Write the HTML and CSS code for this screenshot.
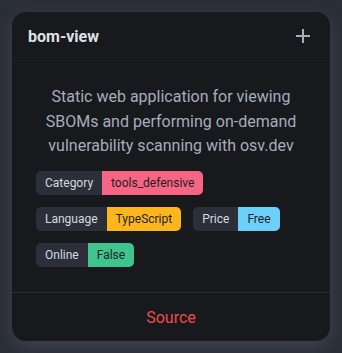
FILE: index.html
```html
<!DOCTYPE html>
<html lang="en">
<head>
<meta charset="UTF-8">
<title>bom-view</title>
<link rel="stylesheet" href="styles.css">
</head>
<body>
    <div class="card">
        <div class="card-header">
            <h2 class="card-title">bom-view</h2>
            <svg class="plus" width="14" height="14" viewBox="0 0 14 14">
                <path d="M7 0v14M0 7h14" stroke="#a6adbb" stroke-width="2"/>
            </svg>
        </div>
        <div class="card-body">
            <p class="desc">Static web application for viewing SBOMs and performing on-demand vulnerability scanning with osv.dev</p>
            <div class="tags">
                <div class="tag-row">
                    <span class="tag"><span class="tag-key">Category</span><span class="tag-val pink">tools_defensive</span></span>
                </div>
                <div class="tag-row">
                    <span class="tag"><span class="tag-key">Language</span><span class="tag-val yellow">TypeScript</span></span>
                    <span class="tag"><span class="tag-key">Price</span><span class="tag-val blue">Free</span></span>
                </div>
                <div class="tag-row">
                    <span class="tag"><span class="tag-key">Online</span><span class="tag-val green">False</span></span>
                </div>
            </div>
        </div>
        <div class="card-footer">
            <a class="source" href="#">Source</a>
        </div>
    </div>
</body>
</html>
```

FILE: styles.css
```css
body {
    margin: 0;
    padding: 12px;
    background: #2a2e37;
    font-family: Roboto, "Noto Sans", sans-serif;
}
.card {
    width: 318px;
    height: 329px;
    box-sizing: border-box;
    background: #18191d;
    border-radius: 14px;
    display: flex;
    flex-direction: column;
    box-shadow: 0 6px 18px rgba(120, 130, 150, 0.25);
}
.card-header {
    height: 48px;
    padding: 0 20px 0 16px;
    display: flex;
    align-items: center;
    justify-content: space-between;
    border-bottom: 1px solid #1c1d22;
}
.card-title {
    margin: 0;
    font-size: 16px;
    font-weight: 700;
    color: #dfe1e6;
}
.plus {
    display: block;
}
.card-body {
    flex: 1;
    padding: 0 24px;
}
.desc {
    margin: 24px 0 12px;
    text-align: center;
    font-size: 16px;
    line-height: 24.5px;
    color: #a6adbb;
}
.tags {
    display: flex;
    flex-direction: column;
    gap: 12px;
}
.tag-row {
    display: flex;
    gap: 12px;
}
.tag {
    display: flex;
    height: 24px;
    border-radius: 5px;
    overflow: hidden;
    font-size: 12px;
    line-height: 24px;
}
.tag-key {
    background: #2b2f3a;
    color: #d6d9df;
    padding: 0 9px;
}
.tag-val {
    color: #1d1f24;
    padding: 0 9px;
}
.pink { background: #f76585; }
.yellow { background: #fbb61b; }
.blue { background: #6cd0fa; }
.green { background: #3fc48d; }
.card-footer {
    height: 48px;
    border-top: 1px solid #2b2e37;
    display: flex;
    align-items: center;
    justify-content: center;
}
.source {
    color: #f04a4a;
    font-size: 16px;
    text-decoration: none;
}
```
